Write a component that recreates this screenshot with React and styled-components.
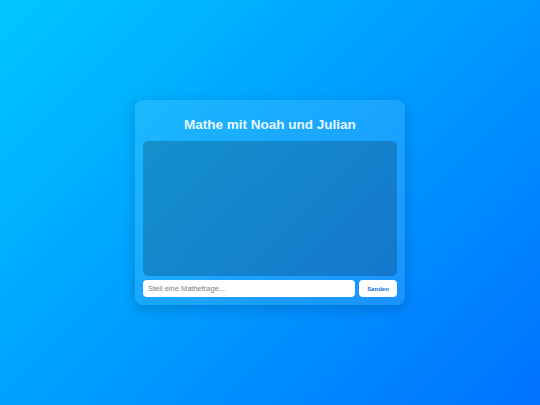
import React from 'react';
import styled, { createGlobalStyle } from 'styled-components';

const GlobalStyle = createGlobalStyle`
  html, body {
    margin: 0;
    padding: 0;
    height: 100%;
  }
  body {
    font-family: "Liberation Sans", Arial, sans-serif;
    background: linear-gradient(135deg, #00c6ff 0%, #0072ff 100%);
  }
  #root {
    height: 100%;
  }
`;

const Page = styled.div`
  height: 100vh;
  display: flex;
  align-items: center;
  justify-content: center;
`;

const Card = styled.div`
  width: 270px;
  box-sizing: border-box;
  padding: 8px;
  border-radius: 8px;
  background: rgba(255, 255, 255, 0.1);
  box-shadow: 0 4px 14px rgba(0, 0, 0, 0.18);
  display: flex;
  flex-direction: column;
`;

const Title = styled.h1`
  margin: 8px 0;
  font-size: 13.5px;
  line-height: 17px;
  font-weight: bold;
  text-align: center;
  color: #e6f8ff;
`;

const ChatBox = styled.div`
  height: 135px;
  border-radius: 5px;
  background: rgba(0, 0, 0, 0.2);
`;

const InputRow = styled.form`
  display: flex;
  gap: 4px;
  margin-top: 4px;
`;

const Input = styled.input`
  flex: 1;
  height: 17px;
  box-sizing: border-box;
  border: none;
  border-radius: 4px;
  padding: 0 5px;
  font-family: "Liberation Sans", Arial, sans-serif;
  font-size: 7.5px;
  background: #fff;
  outline: none;
  &::placeholder {
    color: #808080;
  }
`;

const SendButton = styled.button`
  width: 38px;
  height: 17px;
  border: none;
  border-radius: 4px;
  background: #fff;
  color: #0a6fe0;
  font-family: "Liberation Sans", Arial, sans-serif;
  font-size: 6px;
  font-weight: bold;
  padding: 0;
  cursor: pointer;
`;

export default function App() {
  return (
    <>
      <GlobalStyle />
      <Page>
        <Card>
          <Title>Mathe mit Noah und Julian</Title>
          <ChatBox />
          <InputRow onSubmit={(e) => e.preventDefault()}>
            <Input placeholder="Stell eine Mathefrage..." />
            <SendButton type="submit">Senden</SendButton>
          </InputRow>
        </Card>
      </Page>
    </>
  );
}
